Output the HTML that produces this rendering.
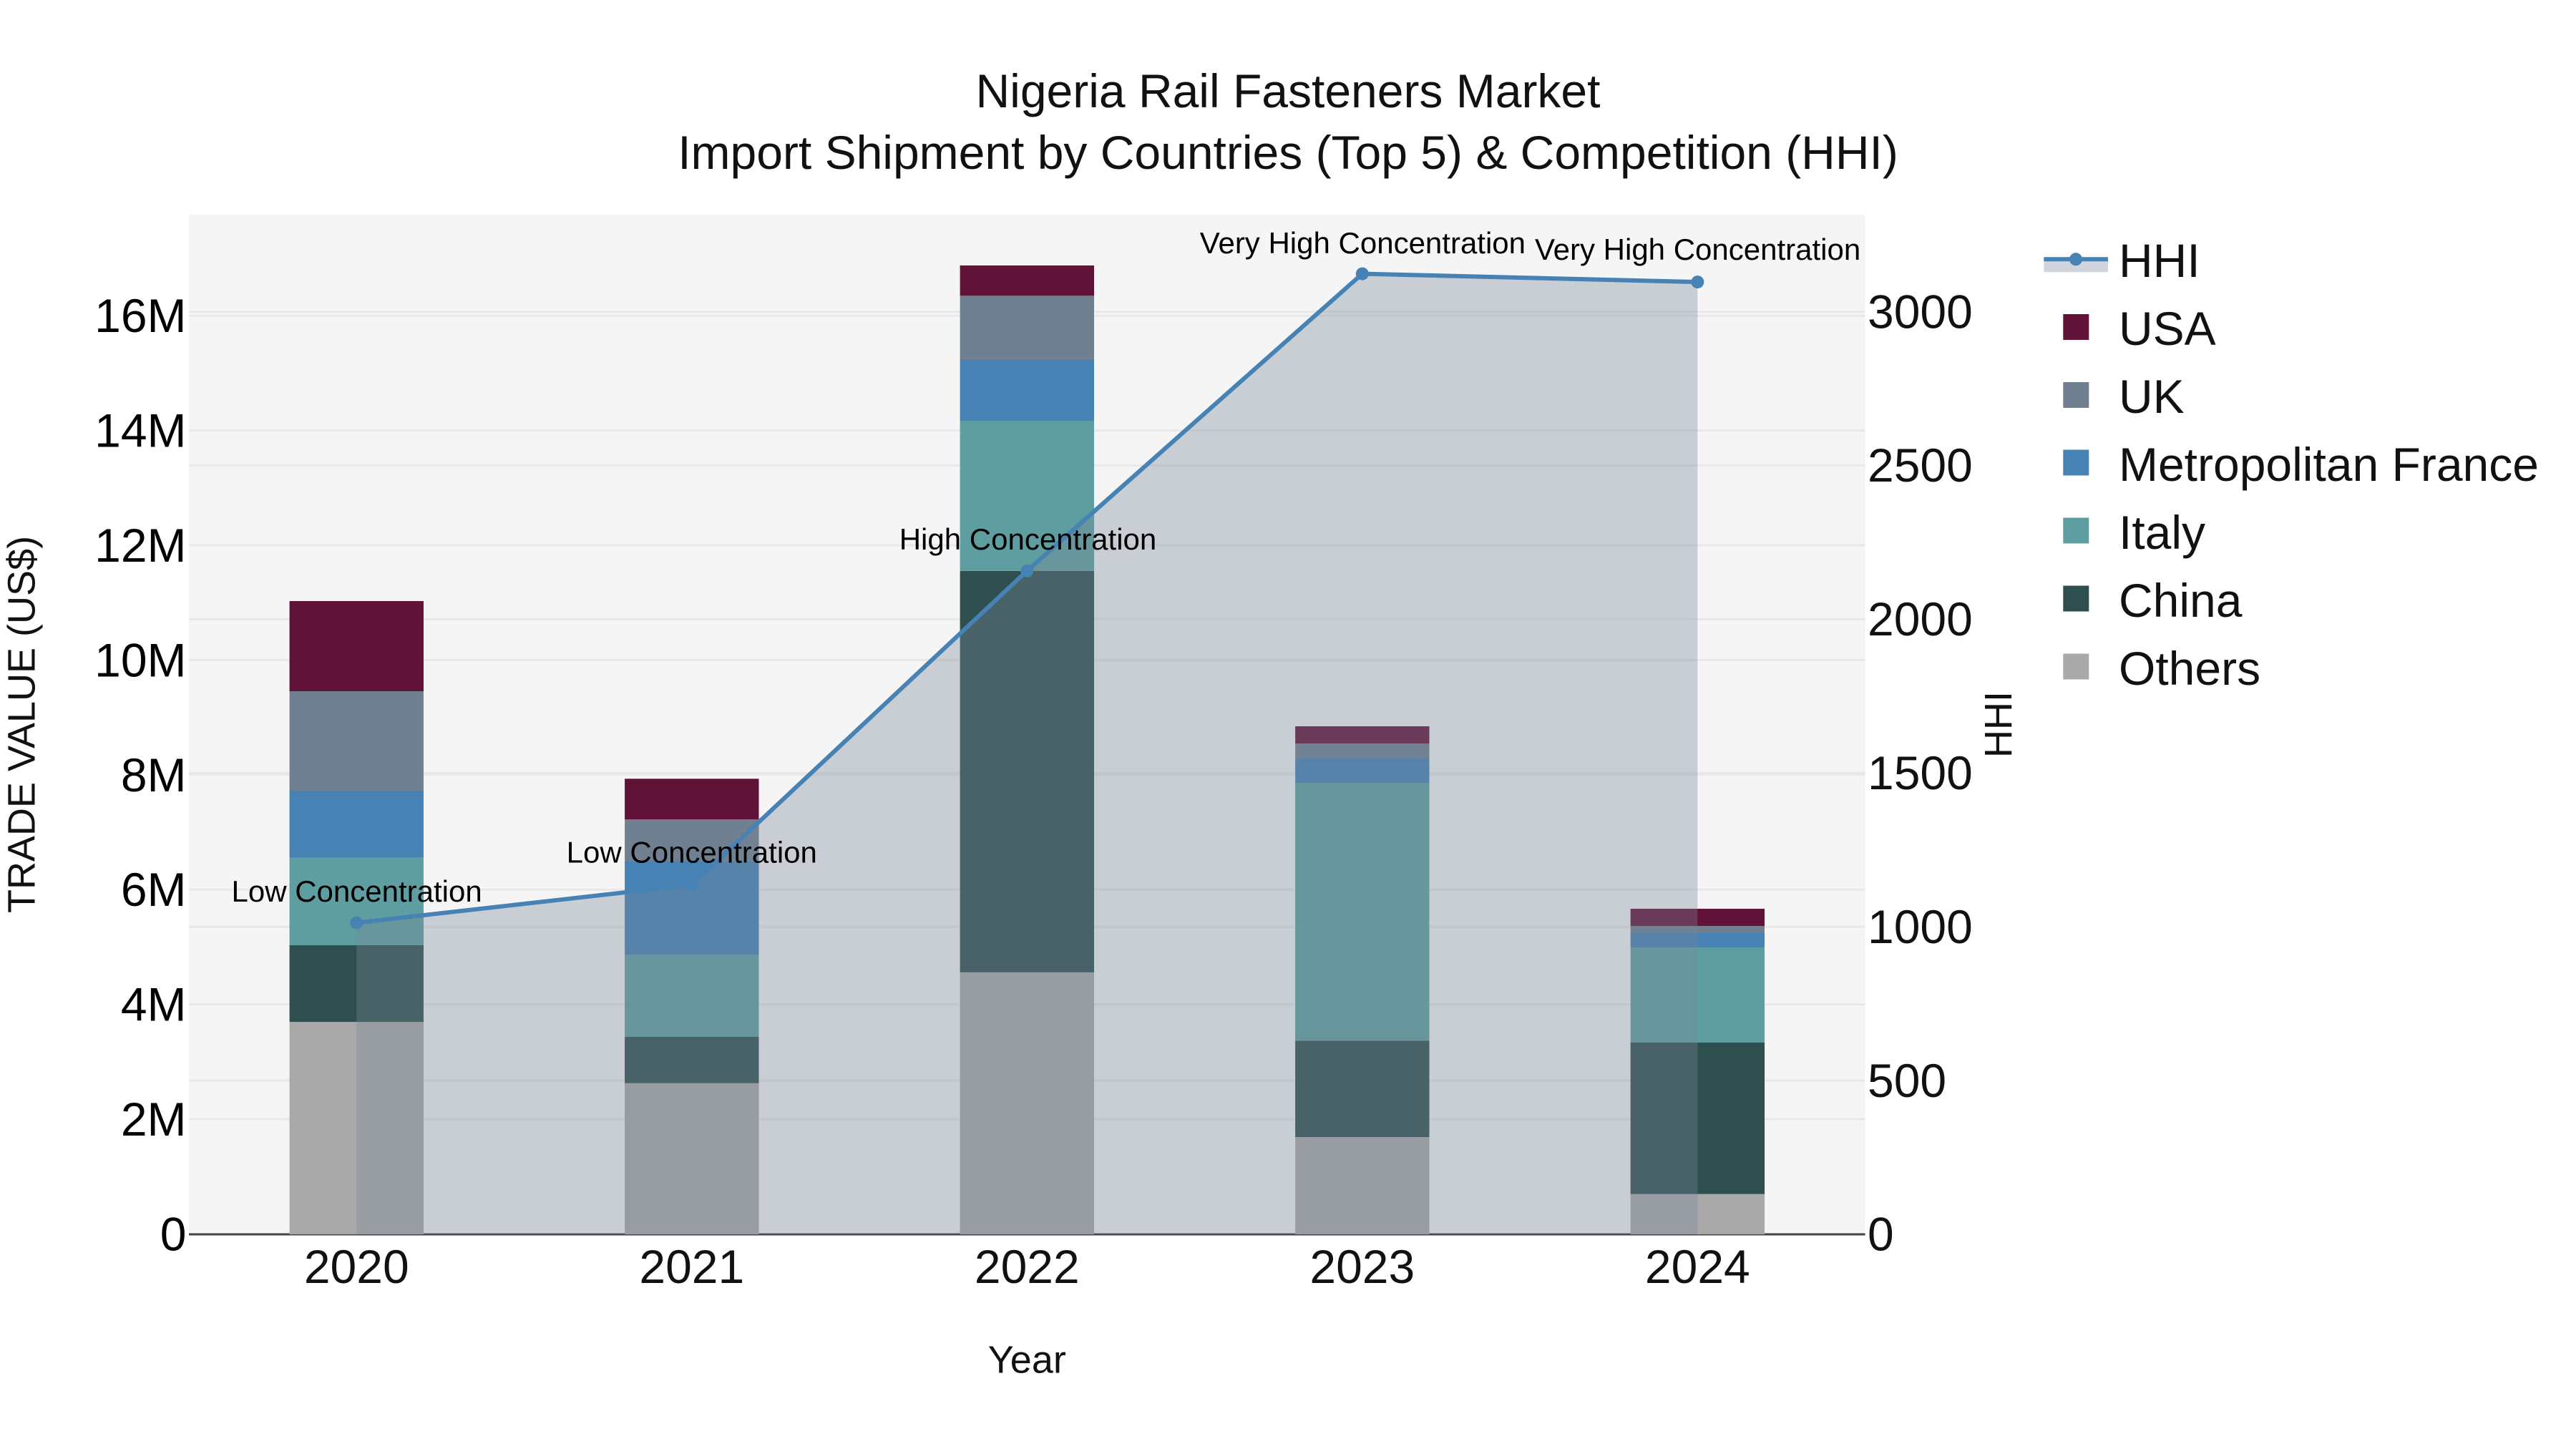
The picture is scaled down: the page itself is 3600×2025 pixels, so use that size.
<!DOCTYPE html>
<html lang="en">
<head>
<meta charset="utf-8">
<title>Nigeria Rail Fasteners Market</title>
<style>
html,body{margin:0;padding:0;background:#fff;width:3600px;height:2025px;overflow:hidden}
svg{display:block}
text{font-family:"Liberation Sans",Arial,sans-serif}
</style>
</head>
<body>
<svg xmlns="http://www.w3.org/2000/svg" width="3600" height="2025" viewBox="0 0 3600 2025">
<rect width="3600" height="2025" fill="#fff"/>
<rect x="264" y="300" width="2342.6" height="1425" fill="#f5f5f5"/>
<!-- grid -->
<g stroke="#e8e8e8" stroke-width="3">
<path d="M264 1564H2606.6M264 1403.6H2606.6M264 1243.2H2606.6M264 1082.8H2606.6M264 922.4H2606.6M264 762H2606.6M264 601.6H2606.6M264 441.2H2606.6"/>
<path d="M264 1510.1H2606.6M264 1295.2H2606.6M264 1080.3H2606.6M264 865.4H2606.6M264 650.5H2606.6M264 435.6H2606.6"/>
</g>
<path d="M264 1725H2606.6" stroke="#444" stroke-width="3"/>
<!-- bars -->
<g>
<rect x="404.56" y="1428.2" width="187.4" height="296.8" fill="#a9a9a9"/>
<rect x="404.56" y="1321" width="187.4" height="107.2" fill="#2f4f4f"/>
<rect x="404.56" y="1198.7" width="187.4" height="122.3" fill="#5f9ea0"/>
<rect x="404.56" y="1105" width="187.4" height="93.7" fill="#4682b4"/>
<rect x="404.56" y="966" width="187.4" height="139" fill="#708090"/>
<rect x="404.56" y="840" width="187.4" height="126" fill="#611337"/>

<rect x="873.08" y="1513.8" width="187.4" height="211.2" fill="#a9a9a9"/>
<rect x="873.08" y="1449" width="187.4" height="64.8" fill="#2f4f4f"/>
<rect x="873.08" y="1334.7" width="187.4" height="114.3" fill="#5f9ea0"/>
<rect x="873.08" y="1204" width="187.4" height="130.7" fill="#4682b4"/>
<rect x="873.08" y="1145" width="187.4" height="59" fill="#708090"/>
<rect x="873.08" y="1088.3" width="187.4" height="56.7" fill="#611337"/>

<rect x="1341.6" y="1358.9" width="187.4" height="366.1" fill="#a9a9a9"/>
<rect x="1341.6" y="797.8" width="187.4" height="561.1" fill="#2f4f4f"/>
<rect x="1341.6" y="588" width="187.4" height="209.8" fill="#5f9ea0"/>
<rect x="1341.6" y="503" width="187.4" height="85" fill="#4682b4"/>
<rect x="1341.6" y="413.3" width="187.4" height="89.7" fill="#708090"/>
<rect x="1341.6" y="371" width="187.4" height="42.3" fill="#611337"/>

<rect x="1810.12" y="1589" width="187.4" height="136" fill="#a9a9a9"/>
<rect x="1810.12" y="1454.3" width="187.4" height="134.7" fill="#2f4f4f"/>
<rect x="1810.12" y="1094" width="187.4" height="360.3" fill="#5f9ea0"/>
<rect x="1810.12" y="1060" width="187.4" height="34" fill="#4682b4"/>
<rect x="1810.12" y="1039.2" width="187.4" height="20.8" fill="#708090"/>
<rect x="1810.12" y="1015" width="187.4" height="24.2" fill="#611337"/>

<rect x="2278.64" y="1668.7" width="187.4" height="56.3" fill="#a9a9a9"/>
<rect x="2278.64" y="1457" width="187.4" height="211.7" fill="#2f4f4f"/>
<rect x="2278.64" y="1324" width="187.4" height="133" fill="#5f9ea0"/>
<rect x="2278.64" y="1304" width="187.4" height="20" fill="#4682b4"/>
<rect x="2278.64" y="1294.2" width="187.4" height="9.8" fill="#708090"/>
<rect x="2278.64" y="1270" width="187.4" height="24.2" fill="#611337"/>
</g>
<!-- HHI area and line -->
<polygon points="498.26,1289.6 966.78,1236.6 1435.3,797.8 1903.82,382.6 2372.34,394.1 2372.34,1725 498.26,1725" fill="#778899" fill-opacity="0.35"/>
<polyline points="498.26,1289.6 966.78,1236.6 1435.3,797.8 1903.82,382.6 2372.34,394.1" fill="none" stroke="#4682b4" stroke-width="6" stroke-linejoin="round"/>
<g fill="#4682b4">
<circle cx="498.26" cy="1289.6" r="9"/>
<circle cx="966.78" cy="1236.6" r="9"/>
<circle cx="1435.3" cy="797.8" r="9"/>
<circle cx="1903.82" cy="382.6" r="9"/>
<circle cx="2372.34" cy="394.1" r="9"/>
</g>
<!-- point labels -->
<g font-size="42" fill="#000" text-anchor="middle">
<text x="498.6" y="1260">Low Concentration</text>
<text x="966.78" y="1205.5">Low Concentration</text>
<text x="1436.5" y="768">High Concentration</text>
<text x="1904.4" y="354">Very High Concentration</text>
<text x="2372.6" y="363">Very High Concentration</text>
</g>
<!-- title -->
<g font-size="66" fill="#111" text-anchor="middle">
<text x="1800" y="150">Nigeria Rail Fasteners Market</text>
<text x="1800" y="236">Import Shipment by Countries (Top 5) &amp; Competition (HHI)</text>
</g>
<!-- left ticks -->
<g font-size="66" fill="#000" text-anchor="end">
<text x="260.5" y="1747.5">0</text>
<text x="260.5" y="1587">2M</text>
<text x="260.5" y="1426.6">4M</text>
<text x="260.5" y="1266.2">6M</text>
<text x="260.5" y="1105.8">8M</text>
<text x="260.5" y="945.4">10M</text>
<text x="260.5" y="785">12M</text>
<text x="260.5" y="624.6">14M</text>
<text x="260.5" y="464.2">16M</text>
</g>
<!-- right ticks -->
<g font-size="66" fill="#111" text-anchor="start">
<text x="2610" y="1747.5">0</text>
<text x="2610" y="1533">500</text>
<text x="2610" y="1318">1000</text>
<text x="2610" y="1103">1500</text>
<text x="2610" y="888">2000</text>
<text x="2610" y="673.2">2500</text>
<text x="2610" y="458.3">3000</text>
</g>
<!-- x ticks -->
<g font-size="66" fill="#111" text-anchor="middle">
<text x="498.26" y="1793">2020</text>
<text x="966.78" y="1793">2021</text>
<text x="1435.3" y="1793">2022</text>
<text x="1903.82" y="1793">2023</text>
<text x="2372.34" y="1793">2024</text>
</g>
<!-- axis titles -->
<text x="1435.3" y="1918.5" font-size="54" fill="#111" text-anchor="middle">Year</text>
<text transform="translate(48.5 1012.5) rotate(-90)" font-size="54" fill="#111" text-anchor="middle">TRADE VALUE (US$)</text>
<text transform="translate(2811 1012.5) rotate(-90)" font-size="54" fill="#111" text-anchor="middle">HHI</text>
<!-- legend -->
<rect x="2856.3" y="362" width="89.7" height="18.3" fill="#778899" fill-opacity="0.35"/>
<path d="M2856.3 362.3H2946" stroke="#4682b4" stroke-width="6"/>
<circle cx="2901" cy="362.3" r="9" fill="#4682b4"/>
<rect x="2883.3" y="439" width="36" height="36" fill="#611337"/>
<rect x="2883.3" y="534" width="36" height="36" fill="#708090"/>
<rect x="2883.3" y="628.5" width="36" height="36" fill="#4682b4"/>
<rect x="2883.3" y="723.5" width="36" height="36" fill="#5f9ea0"/>
<rect x="2883.3" y="818.5" width="36" height="36" fill="#2f4f4f"/>
<rect x="2883.3" y="913.5" width="36" height="36" fill="#a9a9a9"/>
<g font-size="66" fill="#111">
<text x="2961" y="387">HHI</text>
<text x="2961" y="482">USA</text>
<text x="2961" y="577">UK</text>
<text x="2961" y="672">Metropolitan France</text>
<text x="2961" y="767">Italy</text>
<text x="2961" y="862">China</text>
<text x="2961" y="957">Others</text>
</g>
</svg>
</body>
</html>
